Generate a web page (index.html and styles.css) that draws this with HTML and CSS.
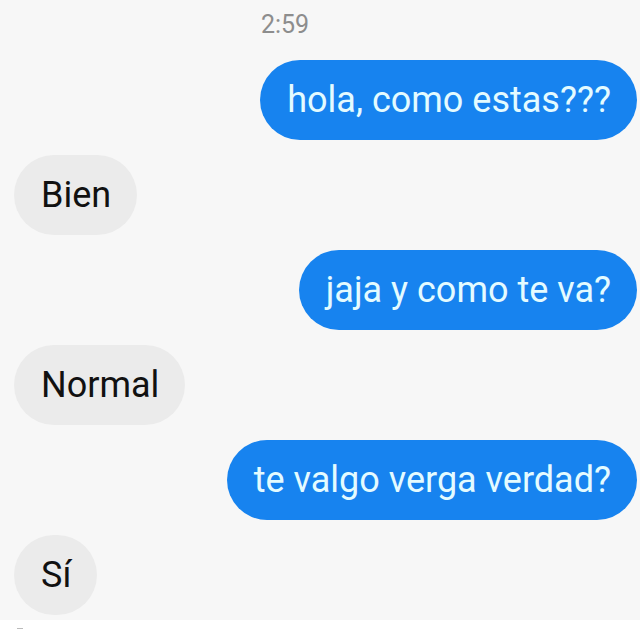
FILE: index.html
```html
<!DOCTYPE html>
<html lang="es">
<head>
<meta charset="utf-8">
<link rel="stylesheet" href="styles.css">
</head>
<body>
<div class="chat">
  <div class="time">2:59</div>
  <div class="row out"><div class="bubble">hola, como estas???</div></div>
  <div class="row in"><div class="bubble">Bien</div></div>
  <div class="row out"><div class="bubble">jaja y como te va?</div></div>
  <div class="row in"><div class="bubble">Normal</div></div>
  <div class="row out"><div class="bubble">te valgo verga verdad?</div></div>
  <div class="row in"><div class="bubble">Sí</div></div>
</div>
<div class="footer"><span class="dash"></span></div>
</body>
</html>
```
FILE: styles.css
```css
html, body {
  margin: 0;
  padding: 0;
  background: #ffffff;
}
body {
  width: 640px;
  height: 640px;
  overflow: hidden;
  font-family: Roboto, "Liberation Sans", sans-serif;
}
.chat {
  background: #f7f7f7;
  height: 620px;
  display: flex;
  flex-direction: column;
  gap: 15px;
  padding: 0 3px 0 14px;
  box-sizing: border-box;
}
.time {
  text-align: center;
  color: #8d8d8d;
  font-size: 25px;
  height: 45px;
  line-height: 25px;
  padding-top: 12px;
  box-sizing: border-box;
  margin-right: 81px;
}
.row {
  display: flex;
}
.row.out { justify-content: flex-end; }
.row.in { justify-content: flex-start; }
.bubble {
  height: 80px;
  line-height: 80px;
  border-radius: 40px;
  padding: 0 26px 0 27px;
  font-size: 36px;
  white-space: nowrap;
}
.out .bubble {
  background: #1783ef;
  color: #e4fbff;
}
.in .bubble {
  background: #ebebeb;
  color: #111111;
}
.footer {
  height: 20px;
  background: #ffffff;
}
.dash {
  display: block;
  width: 6px;
  height: 1px;
  background: #bbbbbb;
  margin: 8px 0 0 17px;
}
```
